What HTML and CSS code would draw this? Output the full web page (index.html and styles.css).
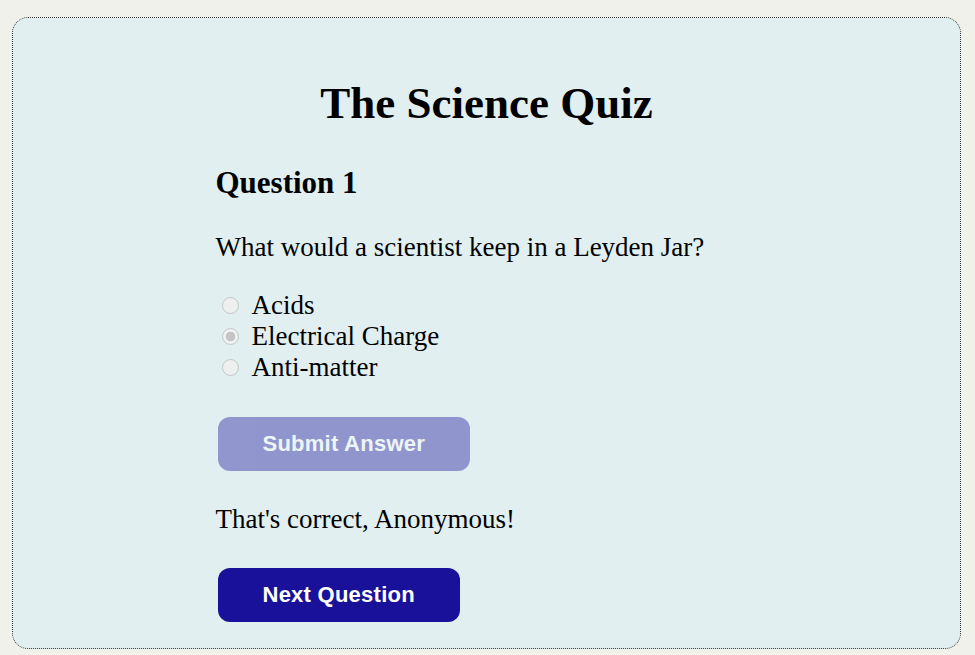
FILE: index.html
```html
<!DOCTYPE html>
<html lang="en">
<head>
<meta charset="utf-8">
<title>The Science Quiz</title>
<link rel="stylesheet" href="styles.css">
</head>
<body>
<div class="card">
  <div class="quiz">
    <h1 class="title">The Science Quiz</h1>
    <h2 class="qnum">Question 1</h2>
    <p class="question">What would a scientist keep in a Leyden Jar?</p>
    <div class="options">
      <label class="opt"><input type="radio" name="a" disabled><span>Acids</span></label>
      <label class="opt"><input type="radio" name="a" checked disabled><span>Electrical Charge</span></label>
      <label class="opt"><input type="radio" name="a" disabled><span>Anti-matter</span></label>
    </div>
    <button class="btn btn-submit" disabled>Submit Answer</button>
    <p class="result">That's correct, Anonymous!</p>
    <button class="btn btn-next">Next Question</button>
  </div>
</div>
</body>
</html>
```
FILE: styles.css
```css
html, body {
  margin: 0;
  padding: 0;
}
body {
  background: #f1f1ec;
  font-family: "Liberation Serif", "Times New Roman", serif;
  color: #000;
}
.card {
  box-sizing: border-box;
  margin: 17px 14px 0 12px;
  height: 632px;
  border: 1px dotted #3a3a3a;
  border-radius: 16px;
  background: #e1eff0;
  padding-top: 59px;
}
.quiz {
  width: 542px;
  margin: 0 auto;
  display: flex;
  flex-direction: column;
  align-items: flex-start;
}
.title {
  align-self: stretch;
  margin: 0;
  text-align: center;
  font-size: 45px;
  line-height: 52px;
  font-weight: bold;
}
.qnum {
  margin: 36px 0 0;
  font-size: 31px;
  line-height: 36px;
  font-weight: bold;
}
.question {
  margin: 31px 0 0;
  font-size: 27px;
  line-height: 31px;
}
.options {
  margin-top: 27px;
  display: flex;
  flex-direction: column;
}
.opt {
  display: flex;
  align-items: center;
  font-size: 27px;
  line-height: 31px;
  height: 31px;
}
.opt input {
  appearance: none;
  -webkit-appearance: none;
  box-sizing: border-box;
  width: 17px;
  height: 17px;
  margin: 0 13px 0 6px;
  border: 1px solid #c6c6c6;
  border-radius: 50%;
  background: #eef0f0;
  flex: none;
}
.opt input:checked {
  background: radial-gradient(circle, #c4c4c4 0 4.6px, #f4f6f6 5.2px 6px, #eef0f0 6.2px);
}
.btn {
  margin-left: 2px;
  height: 54px;
  padding: 0 45px;
  border: none;
  border-radius: 12px;
  background: #1a119b;
  color: #fff;
  font-family: "Liberation Sans", Arial, sans-serif;
  font-size: 22px;
  font-weight: bold;
  letter-spacing: 0.25px;
}
.btn-submit {
  margin-top: 34px;
  opacity: 0.4;
}
.result {
  margin: 33px 0 0;
  font-size: 27px;
  line-height: 31px;
}
.btn-next {
  margin-top: 33px;
}
```
